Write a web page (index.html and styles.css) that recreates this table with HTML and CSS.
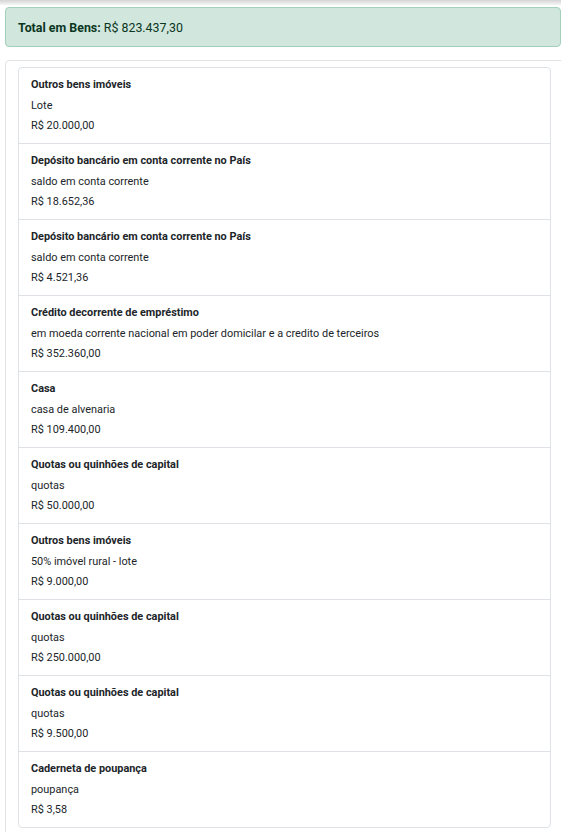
FILE: index.html
```html
<!DOCTYPE html>
<html lang="pt-BR">
<head>
    <meta charset="UTF-8">
    <meta name="viewport" content="width=device-width, initial-scale=1.0">
    <title>Bens declarados</title>
    <link rel="stylesheet" href="styles.css">
</head>
<body>
<div class="top-shade"></div>

<div class="alert-total">
    <strong>Total em Bens:</strong> R$ 823.437,30
</div>

<div class="card">
    <ul class="bens-list">
        <li class="bem">
            <div class="bem-tipo">Outros bens imóveis</div>
            <div>Lote</div>
            <div>R$ 20.000,00</div>
        </li>
        <li class="bem">
            <div class="bem-tipo">Depósito bancário em conta corrente no País</div>
            <div>saldo em conta corrente</div>
            <div>R$ 18.652,36</div>
        </li>
        <li class="bem">
            <div class="bem-tipo">Depósito bancário em conta corrente no País</div>
            <div>saldo em conta corrente</div>
            <div>R$ 4.521,36</div>
        </li>
        <li class="bem">
            <div class="bem-tipo">Crédito decorrente de empréstimo</div>
            <div>em moeda corrente nacional em poder domicilar e a credito de terceiros</div>
            <div>R$ 352.360,00</div>
        </li>
        <li class="bem">
            <div class="bem-tipo">Casa</div>
            <div>casa de alvenaria</div>
            <div>R$ 109.400,00</div>
        </li>
        <li class="bem">
            <div class="bem-tipo">Quotas ou quinhões de capital</div>
            <div>quotas</div>
            <div>R$ 50.000,00</div>
        </li>
        <li class="bem">
            <div class="bem-tipo">Outros bens imóveis</div>
            <div>50% imóvel rural - lote</div>
            <div>R$ 9.000,00</div>
        </li>
        <li class="bem">
            <div class="bem-tipo">Quotas ou quinhões de capital</div>
            <div>quotas</div>
            <div>R$ 250.000,00</div>
        </li>
        <li class="bem">
            <div class="bem-tipo">Quotas ou quinhões de capital</div>
            <div>quotas</div>
            <div>R$ 9.500,00</div>
        </li>
        <li class="bem">
            <div class="bem-tipo">Caderneta de poupança</div>
            <div>poupança</div>
            <div>R$ 3,58</div>
        </li>
    </ul>
</div>
</body>
</html>
```

FILE: styles.css
```css
body {
    margin: 0;
    font-family: Roboto, "Liberation Sans", sans-serif;
    color: #212529;
    background: #fff;
    overflow-x: hidden;
}

.top-shade {
    height: 5px;
    background: linear-gradient(#d4d4d4, #f6f6f6);
}

.alert-total {
    width: 556px;
    box-sizing: border-box;
    margin: 2px 0 0 5px;
    padding: 12px 12px 11px;
    font-size: 12.4px;
    line-height: 15px;
    color: #0a3622;
    background-color: #d1e7dd;
    border: 1px solid #a3cfbb;
    border-radius: 4px;
}

.alert-total strong {
    font-weight: bold;
}

.card {
    width: 560px;
    box-sizing: border-box;
    margin: 13px 0 0 5px;
    padding: 6px 12px 12px;
    border: 1px solid #e3e3e3;
    border-radius: 4px;
}

.bens-list {
    list-style: none;
    margin: 0;
    padding: 0;
    width: 531px;
    border: 1px solid #dee2e6;
    border-radius: 4px;
}

.bem {
    padding: 7px 12px 6.5px;
    font-size: 10.9px;
    line-height: 20.5px;
    border-top: 1px solid #dee2e6;
}

.bem:first-child {
    border-top: none;
}

.bem-tipo {
    font-weight: bold;
}
```
